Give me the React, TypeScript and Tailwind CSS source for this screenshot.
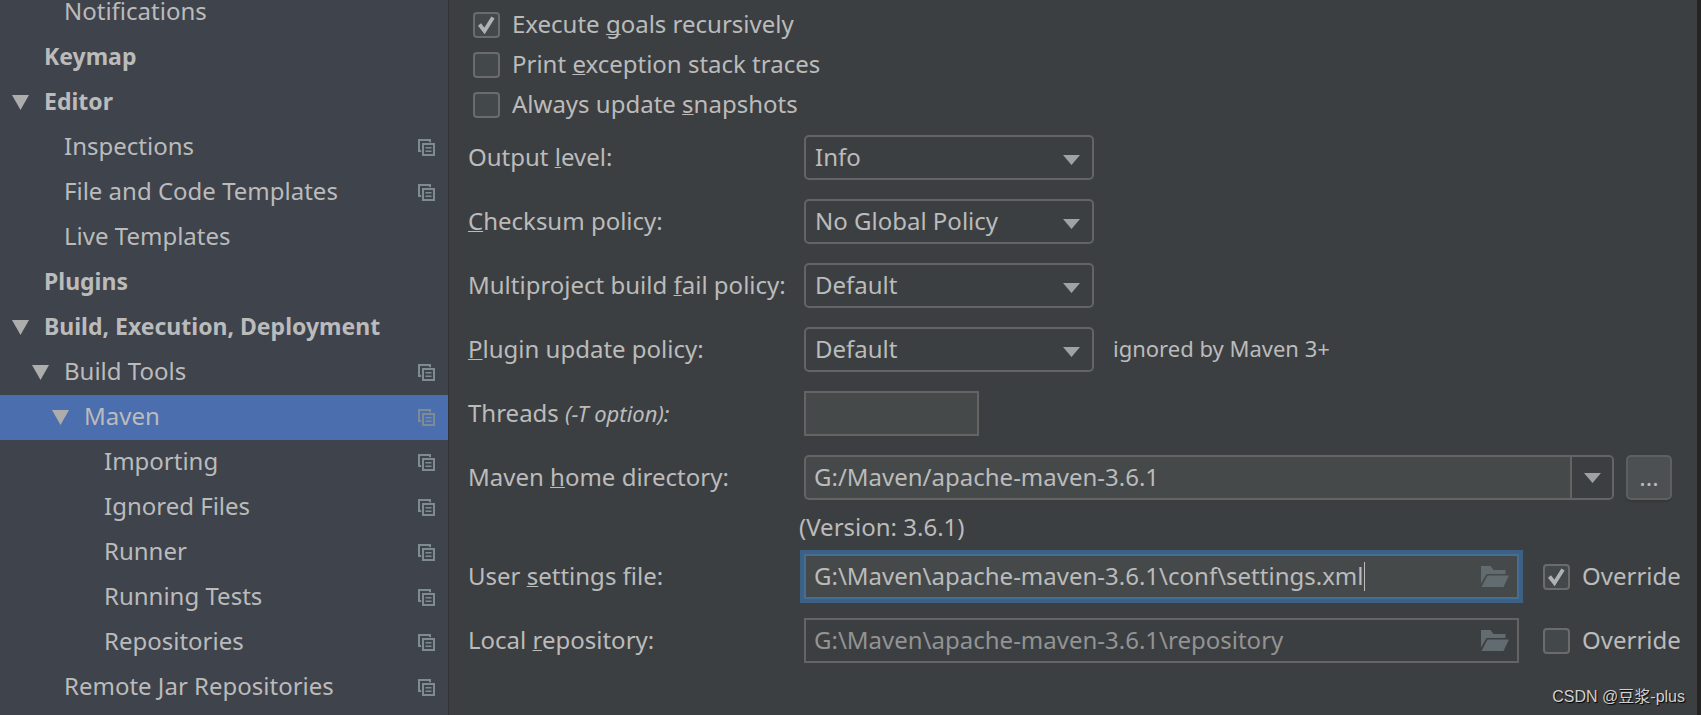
import type { ReactNode } from "react";

type TreeItem = {
  label: string;
  level: 1 | 2 | 3 | 4;
  open?: boolean;
  bold?: boolean;
  project?: boolean;
  selected?: boolean;
};

const tree: TreeItem[] = [
  { label: "Notifications", level: 2 },
  { label: "Keymap", level: 1, bold: true },
  { label: "Editor", level: 1, bold: true, open: true },
  { label: "Inspections", level: 2, project: true },
  { label: "File and Code Templates", level: 2, project: true },
  { label: "Live Templates", level: 2 },
  { label: "Plugins", level: 1, bold: true },
  { label: "Build, Execution, Deployment", level: 1, bold: true, open: true },
  { label: "Build Tools", level: 2, open: true, project: true },
  { label: "Maven", level: 3, open: true, project: true, selected: true },
  { label: "Importing", level: 4, project: true },
  { label: "Ignored Files", level: 4, project: true },
  { label: "Runner", level: 4, project: true },
  { label: "Running Tests", level: 4, project: true },
  { label: "Repositories", level: 4, project: true },
  { label: "Remote Jar Repositories", level: 2, project: true },
];

const indent = {
  1: "pl-3",
  2: "pl-8",
  3: "pl-[52px]",
  4: "pl-[72px]",
};

function ProjectIcon() {
  return (
    <svg width="17" height="17" viewBox="0 0 17 17" fill="none" stroke="#7f8b93" className="shrink-0" aria-hidden>
      <path d="M12 3.200V1H1v11h2.200" strokeWidth="2" />
      <path d="M5 5h11v11H5z" strokeWidth="2" />
      <path d="M7.500 8.700h6M7.500 12.200h6" strokeWidth="1.500" />
    </svg>
  );
}

function FolderIcon() {
  return (
    <svg width="28" height="22" viewBox="0 0 28 22" fill="#626b6f" aria-hidden>
      <path d="M0 0h9.500l3 4H24.500v4H5.500L0 17.500z" />
      <path d="M6.500 9.500H28L22.500 21H0.500z" />
    </svg>
  );
}

function Arrow() {
  return (
    <svg width="17" height="10" viewBox="0 0 17 10" fill="#9fa1a3" aria-hidden>
      <path d="M0 0h17L8.500 10z" />
    </svg>
  );
}

// underlined letter of a keyboard shortcut
function M({ children }: { children: ReactNode }) {
  return <u className="underline decoration-1 underline-offset-1 [text-decoration-skip-ink:none]">{children}</u>;
}

function CheckBox({ id, checked, children }: { id: string; checked?: boolean; children: ReactNode }) {
  return (
    <div className="flex shrink-0 items-center gap-3">
      <span className="relative flex">
        <input
          id={id}
          type="checkbox"
          defaultChecked={checked}
          className="peer h-[26px] w-[27px] appearance-none rounded border-2 border-[#6b6b6b] bg-[#43494a]"
        />
        <svg
          width="27"
          height="26"
          viewBox="0 0 27 26"
          fill="none"
          stroke="#afb1b3"
          strokeWidth="3.800"
          className="pointer-events-none absolute inset-0 hidden peer-checked:block"
          aria-hidden
        >
          <path d="M6.500 12.500l5 6.500L20 5.500" />
        </svg>
      </span>
      <label htmlFor={id} className="pb-0.5 whitespace-nowrap">
        {children}
      </label>
    </div>
  );
}

function Row({ id, label, children }: { id: string; label: ReactNode; children: ReactNode }) {
  return (
    <div className="flex h-[45px] items-center">
      <label htmlFor={id} className="w-[336px] shrink-0 pb-0.5 whitespace-nowrap">
        {label}
      </label>
      {children}
    </div>
  );
}

function Select({ id, options }: { id: string; options: string[] }) {
  return (
    <div className="relative h-[45px] w-[290px] shrink-0">
      <select
        id={id}
        className="size-full appearance-none rounded-[5px] border-2 border-[#646464] bg-[#3c3f41] px-[9px] pb-0.5"
      >
        {options.map((o) => (
          <option key={o}>{o}</option>
        ))}
      </select>
      <span className="pointer-events-none absolute top-5 right-3.5">
        <Arrow />
      </span>
    </div>
  );
}

export default function App() {
  return (
    <div className="relative flex h-screen overflow-hidden bg-[#3c3f41] font-['Noto_Sans','Noto_Sans_CJK_SC',sans-serif] text-2xl leading-8 text-[#bbbbbb]">
      <nav className="w-[449px] shrink-0 overflow-hidden border-r border-[#323232] bg-[#3f434c]">
        <ul className="-mt-2.5">
          {tree.map((item) => (
            <li key={item.label}>
              <a
                href="#"
                className={`flex h-[45px] items-center pr-[13px] ${indent[item.level]} ${item.selected ? "bg-[#4b6eaf]" : ""} ${item.bold ? "text-[23px] font-bold" : ""}`}
              >
                <span className="w-8 shrink-0">
                  {item.open && (
                    <svg width="17" height="15" viewBox="0 0 17 15" fill="#adadad" aria-hidden>
                      <path d="M0 0h17L8.500 15z" />
                    </svg>
                  )}
                </span>
                <span className="flex-1 pb-1 leading-7 whitespace-nowrap">{item.label}</span>
                {item.project && <ProjectIcon />}
              </a>
            </li>
          ))}
        </ul>
      </nav>

      <main className="min-w-0 flex-1 border-r-4 border-[#242424] pt-2 pr-5 pl-[19px]">
        <div className="flex flex-col gap-1.5 pl-[5px]">
          <CheckBox id="recursive" checked>
            Execute <M>g</M>oals recursively
          </CheckBox>
          <CheckBox id="traces">
            Print <M>e</M>xception stack traces
          </CheckBox>
          <CheckBox id="snapshots">
            Always update <M>s</M>napshots
          </CheckBox>
        </div>

        <div className="mt-[13px] flex flex-col gap-[19px]">
          <Row id="output" label={<>Output <M>l</M>evel:</>}>
            <Select id="output" options={["Info", "Debug", "Warn", "Error", "Fatal"]} />
          </Row>
          <Row id="checksum" label={<><M>C</M>hecksum policy:</>}>
            <Select id="checksum" options={["No Global Policy", "Fail", "Warn"]} />
          </Row>
          <Row id="fail" label={<>Multiproject build <M>f</M>ail policy:</>}>
            <Select id="fail" options={["Default", "Fail Fast", "Fail At End", "Never Fail"]} />
          </Row>
          <Row id="update" label={<><M>P</M>lugin update policy:</>}>
            <Select id="update" options={["Default", "Check For Updates", "Suppress Updates"]} />
            <span className="ml-[19px] pb-1 text-[22px]">ignored by Maven 3+</span>
          </Row>
          <Row
            id="threads"
            label={
              <>
                Threads <i className="text-[22px]">(-T option):</i>
              </>
            }
          >
            <input id="threads" className="h-full w-[175px] border-2 border-[#646464] bg-[#45494a] px-2" />
          </Row>
          <Row id="home" label={<>Maven <M>h</M>ome directory:</>}>
            <div className="mr-[5px] flex h-full flex-1 gap-3">
              <div className="flex min-w-0 flex-1 overflow-hidden rounded-[5px] border-2 border-[#646464] bg-[#45494a]">
                <input id="home" defaultValue="G:/Maven/apache-maven-3.6.1" className="min-w-0 flex-1 px-2 pb-0.5" />
                <button
                  aria-label="Show directories"
                  className="flex w-[42px] items-center justify-center border-l-2 border-[#646464] bg-[#3c3f41]"
                >
                  <Arrow />
                </button>
              </div>
              <button className="w-[46px] rounded-[5px] border-2 border-[#5e6060] bg-[#4c5052] pb-0.5 shadow-[0_2px_1px_#36393a]">
                ...
              </button>
            </div>
          </Row>
        </div>

        <p className="my-[11px] ml-[331px]">(Version: 3.6.1)</p>

        <div className="flex flex-col gap-[19px]">
          <Row id="settings" label={<>User <M>s</M>ettings file:</>}>
            <div className="relative mr-6 h-full flex-1">
              <input
                id="settings"
                defaultValue="G:\Maven\apache-maven-3.6.1\conf\settings.xml"
                className="size-full border-2 border-[#466d94] bg-[#45494a] px-2 pb-0.5 caret-transparent shadow-[0_0_0_4px_#3d6185] outline-none"
              />
              <span className="absolute top-2 left-[560px] h-[29px] w-px bg-[#bbbbbb]" />
              <button aria-label="Browse settings file" className="absolute top-3 right-2.5">
                <FolderIcon />
              </button>
            </div>
            <div className="w-[134px]">
              <CheckBox id="override-settings" checked>
                Override
              </CheckBox>
            </div>
          </Row>
          <Row id="repository" label={<>Local <M>r</M>epository:</>}>
            <div className="relative mr-6 h-full flex-1">
              <input
                id="repository"
                readOnly
                defaultValue="G:\Maven\apache-maven-3.6.1\repository"
                className="size-full border-2 border-[#646464] px-2 pb-0.5 text-[#939393]"
              />
              <button aria-label="Browse repository" className="absolute top-3 right-2.5">
                <FolderIcon />
              </button>
            </div>
            <div className="w-[134px]">
              <CheckBox id="override-repository">Override</CheckBox>
            </div>
          </Row>
        </div>
      </main>

      <span className="absolute right-4 bottom-1.5 font-['Liberation_Sans','Noto_Sans_CJK_SC',sans-serif] text-base leading-6 text-[#d0d0d0] [text-shadow:1px_1px_1px_#000]">
        CSDN @豆浆-plus
      </span>
    </div>
  );
}
